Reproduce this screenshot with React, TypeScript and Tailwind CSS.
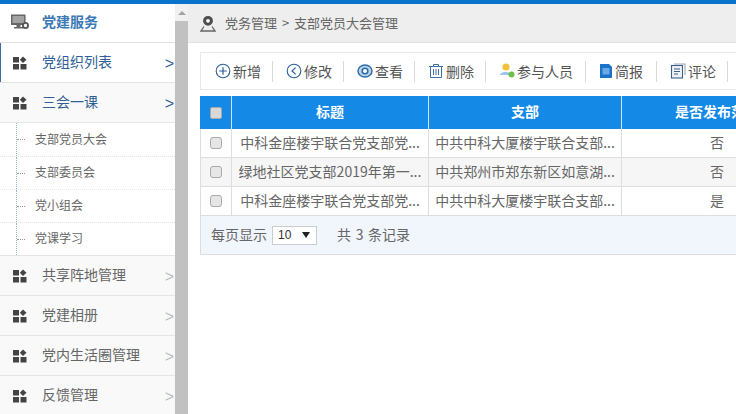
const font = { fontFamily: '"Noto Sans CJK SC", "Liberation Sans", sans-serif' };

const GridIcon = () => (
  <svg width="14" height="14" viewBox="0 0 14 14" className="shrink-0">
    <rect x="0" y="1" width="6" height="5.5" fill="#444" />
    <path d="M10 0.5 L13.5 3.8 L10 7 L6.8 3.8 Z" fill="#444" />
    <rect x="0" y="8" width="6" height="5.5" fill="#444" />
    <rect x="7.5" y="8" width="6" height="5.5" fill="#444" />
  </svg>
);

const MonitorIcon = () => (
  <svg width="18" height="16" viewBox="0 0 18 16">
    <rect x="0" y="0.5" width="14.5" height="10.5" fill="#666" />
    <rect x="1.5" y="2" width="11.5" height="7" fill="#a3a3a3" />
    <rect x="5.5" y="11" width="4" height="2" fill="#666" />
    <rect x="3" y="13" width="9" height="1.5" fill="#666" />
    <circle cx="14.5" cy="11.5" r="2.6" fill="#fff" stroke="#555" strokeWidth="1.8" />
  </svg>
);

const PinIcon = () => (
  <svg width="16" height="17" viewBox="0 0 16 17">
    <circle cx="8" cy="5.8" r="3.4" fill="#fff" stroke="#4d4d4d" strokeWidth="3" />
    <path d="M4 11.5 L1 16 H15 L12 11.5" fill="none" stroke="#666" strokeWidth="1.3" />
  </svg>
);

const toolIcons: Record<string, React.ReactNode> = {
  add: (
    <svg width="16" height="16" viewBox="0 0 16 16">
      <circle cx="8" cy="8" r="6.8" fill="none" stroke="#2a5f9e" strokeWidth="1.1" />
      <path d="M8 4.2 V11.8 M4.2 8 H11.8" stroke="#2a5f9e" strokeWidth="1.2" />
    </svg>
  ),
  edit: (
    <svg width="16" height="16" viewBox="0 0 16 16">
      <circle cx="8" cy="8" r="6.8" fill="none" stroke="#2a5f9e" strokeWidth="1.1" />
      <path d="M9.6 4.6 L6 8 L9.6 11.4" fill="none" stroke="#2a5f9e" strokeWidth="1.2" />
    </svg>
  ),
  view: (
    <svg width="16" height="16" viewBox="0 0 16 16">
      <ellipse cx="8" cy="8" rx="7" ry="6" fill="#bcd4ea" stroke="#2a6ca8" strokeWidth="1.4" />
      <circle cx="8" cy="8" r="2.8" fill="#fff" stroke="#2a6ca8" strokeWidth="1.6" />
    </svg>
  ),
  trash: (
    <svg width="16" height="16" viewBox="0 0 16 16" fill="none" stroke="#3d6ea5" strokeWidth="1">
      <path d="M1 3.5 H15 M5.5 3.5 V1.5 H10.5 V3.5 M2.5 3.5 V14.5 H13.5 V3.5 M5.5 6 V12 M8 6 V12 M10.5 6 V12" />
    </svg>
  ),
  people: (
    <svg width="16" height="18" viewBox="0 0 16 18">
      <circle cx="7" cy="5" r="3.6" fill="#f2c23e" />
      <path d="M1 13 C1 9 12 9 12 13 Z" fill="#9cc4ec" />
      <circle cx="12.5" cy="12.5" r="3" fill="#6cbf4b" />
    </svg>
  ),
  brief: (
    <svg width="14" height="16" viewBox="0 0 14 16">
      <path d="M1 1 H10 L13 4 V14 C13 15 12 15 12 15 H1 Z" fill="#1a73c8" />
      <rect x="3.5" y="5" width="7" height="6.5" fill="#6aa9e4" />
    </svg>
  ),
  comment: (
    <svg width="16" height="16" viewBox="0 0 16 16" fill="none" stroke="#3f5f85" strokeWidth="1.1">
      <path d="M4 1 H15 V12" stroke="#9aa8bb" />
      <rect x="1.5" y="2.5" width="11" height="12.5" fill="#eef1f7" />
      <path d="M4 6 H10 M4 8.5 H10 M4 11 H8" />
    </svg>
  ),
};

const tools = [
  { icon: "add", label: "新增", w: "w-[58px]" },
  { icon: "edit", label: "修改", w: "w-[58px]" },
  { icon: "view", label: "查看", w: "w-[58px]" },
  { icon: "trash", label: "删除", w: "w-[58px]" },
  { icon: "people", label: "参与人员", w: "w-[87px]" },
  { icon: "brief", label: "简报", w: "w-[58px]" },
  { icon: "comment", label: "评论", w: "w-[58px]" },
];

const rows = [
  { title: "中科金座楼宇联合党支部党...", branch: "中共中科大厦楼宇联合支部...", pub: "否", striped: false },
  { title: "绿地社区党支部2019年第一...", branch: "中共郑州市郑东新区如意湖...", pub: "否", striped: true },
  { title: "中科金座楼宇联合党支部党...", branch: "中共中科大厦楼宇联合支部...", pub: "是", striped: false },
];

const MenuItem = ({ label, muted, active, bg }: { label: string; muted?: boolean; active?: boolean; bg?: string }) => (
  <div className={`h-10 shrink-0 flex items-center border-b border-[#e5e5e5] relative ${bg ?? "bg-[#f9f9f9]"}`}>
    {active && <div className="absolute left-0 top-0 bottom-0 w-[1px] bg-[#3a6ea5]" />}
    <div className="w-[42px] pl-[13px] shrink-0">
      <GridIcon />
    </div>
    <span className={`flex-1 text-[14px] pb-[2px] ${muted ? "text-[#666]" : "text-[#2f5f96]"}`}>{label}</span>
    <span className={`text-[16px] pt-[2px] pr-[1px] ${muted ? "text-[#bbb]" : "text-[#2f5f96]"}`} style={{ fontFamily: "Liberation Sans" }}>
      &gt;
    </span>
  </div>
);

const SubItem = ({ label, h, last }: { label: string; h: string; last?: boolean }) => (
  <div className={`${h} shrink-0 flex items-center bg-white relative border-b ${last ? "border-[#e5e5e5]" : "border-dotted border-[#e5e5e5]"}`}>
    <div className="absolute left-[16px] top-0 bottom-0 border-l border-dotted border-[#8fb8c8]" />
    <div className="ml-[17px] w-[8px] border-t border-dotted border-[#999]" />
    <span className="ml-[10px] pb-[2px] text-[12px] text-[#666]">{label}</span>
  </div>
);

const Scrollbar = () => (
  <div className="w-[13px] shrink-0 bg-[#f1f1f1] flex flex-col">
    <div className="h-[17px] flex items-center justify-center">
      <div className="w-0 h-0 border-l-[4px] border-r-[4px] border-b-[4px] border-l-transparent border-r-transparent border-b-[#a3a3a3]" />
    </div>
    <div className="flex-1 bg-[#c1c1c1]" />
  </div>
);

export default function App() {
  return (
    <div className="w-[736px] h-[414px] overflow-hidden flex flex-col bg-white" style={font}>
      <div className="h-1 shrink-0 bg-[#0a74cc]" />
      <div className="flex-1 flex min-h-0">
        <aside className="w-[175px] shrink-0 flex flex-col overflow-hidden bg-white">
          <div className="h-[39px] shrink-0 flex items-center pb-[3px] border-b border-[#e0e0e0]">
            <div className="w-[42px] pl-[11px] shrink-0 flex">
              <MonitorIcon />
            </div>
            <span className="text-[14px] font-bold text-[#3c7ab5]">党建服务</span>
          </div>
          <MenuItem label="党组织列表" active bg="bg-white" />
          <MenuItem label="三会一课" />
          <SubItem label="支部党员大会" h="h-[34px]" />
          <SubItem label="支部委员会" h="h-[33px]" />
          <SubItem label="党小组会" h="h-[33px]" />
          <SubItem label="党课学习" h="h-[33px]" last />
          <MenuItem label="共享阵地管理" muted />
          <MenuItem label="党建相册" muted />
          <MenuItem label="党内生活圈管理" muted />
          <MenuItem label="反馈管理" muted />
        </aside>
        <Scrollbar />
        <main className="flex-1 min-w-0 flex flex-col overflow-hidden">
          <div className="h-[39px] shrink-0 bg-[#eeeeee] border-b border-[#e3e3e3] flex items-center pl-[12px] gap-[9px]">
            <PinIcon />
            <span className="text-[13px] text-[#666] whitespace-pre [word-spacing:2px]">党务管理 &gt; 支部党员大会管理</span>
          </div>
          <div className="pl-[12px] pt-[9px] flex flex-col w-[900px]">
            <div className="h-[38px] border border-[#e8e8e8] flex items-center pl-[14px] gap-[13px]">
              {tools.map((t) => (
                <div key={t.label} className={`${t.w} h-[21px] shrink-0 flex items-center gap-[2px] border-r border-[#d9d9d9]`}>
                  {toolIcons[t.icon]}
                  <span className="text-[14px] text-[#555]">{t.label}</span>
                </div>
              ))}
            </div>
            <div className="mt-[6px] flex flex-col">
              <div className="h-[33px] bg-[#1589e6] flex text-white text-[14px] font-bold">
                <div className="w-[32px] flex items-center justify-center border-r border-[#cfe6f8]">
                  <div className="w-[12px] h-[12px] bg-[#d8d8d8] border border-[#aaa] rounded-[2px]" />
                </div>
                <div className="w-[197px] pb-[2px] flex items-center justify-center border-r border-[#cfe6f8]">标题</div>
                <div className="w-[193px] pb-[2px] flex items-center justify-center border-r border-[#cfe6f8]">支部</div>
                <div className="w-[190px] pb-[2px] flex items-center justify-center">是否发布范围</div>
              </div>
              {rows.map((r, i) => (
                <div key={i} className={`h-[29px] flex text-[14px] text-[#666] border-b border-[#dedede] ${r.striped ? "bg-[#f6f6f6]" : "bg-white"}`}>
                  <div className="w-[32px] flex items-center justify-center border-r border-l border-[#dedede]">
                    <div className="w-[12px] h-[12px] bg-[#e6e6e6] border border-[#aaa] rounded-[3px]" />
                  </div>
                  <div className="w-[197px] pb-[2px] flex items-center justify-center border-r border-[#dedede] whitespace-nowrap">{r.title}</div>
                  <div className="w-[193px] pb-[2px] flex items-center justify-center border-r border-[#dedede] whitespace-nowrap">{r.branch}</div>
                  <div className="w-[190px] pb-[2px] flex items-center justify-center">{r.pub}</div>
                </div>
              ))}
              <div className="h-[39px] bg-[#f1f5fc] border-b border-l border-[#dedede] flex items-center pl-[10px] text-[14px] text-[#666]">
                <span className="pb-[2px]">每页显示</span>
                <div className="ml-[5px] w-[45px] h-[19px] bg-white border border-[#ccc] flex items-center justify-between pl-[5px] pr-[6px] text-[#333] text-[12px]" style={{ fontFamily: "Liberation Sans" }}>
                  10
                  <div className="w-0 h-0 border-l-[4px] border-r-[4px] border-t-[6px] border-l-transparent border-r-transparent border-t-[#222]" />
                </div>
                <span className="ml-[20px] pb-[2px] whitespace-pre [word-spacing:1.5px]">共 3 条记录</span>
              </div>
            </div>
          </div>
        </main>
      </div>
    </div>
  );
}
